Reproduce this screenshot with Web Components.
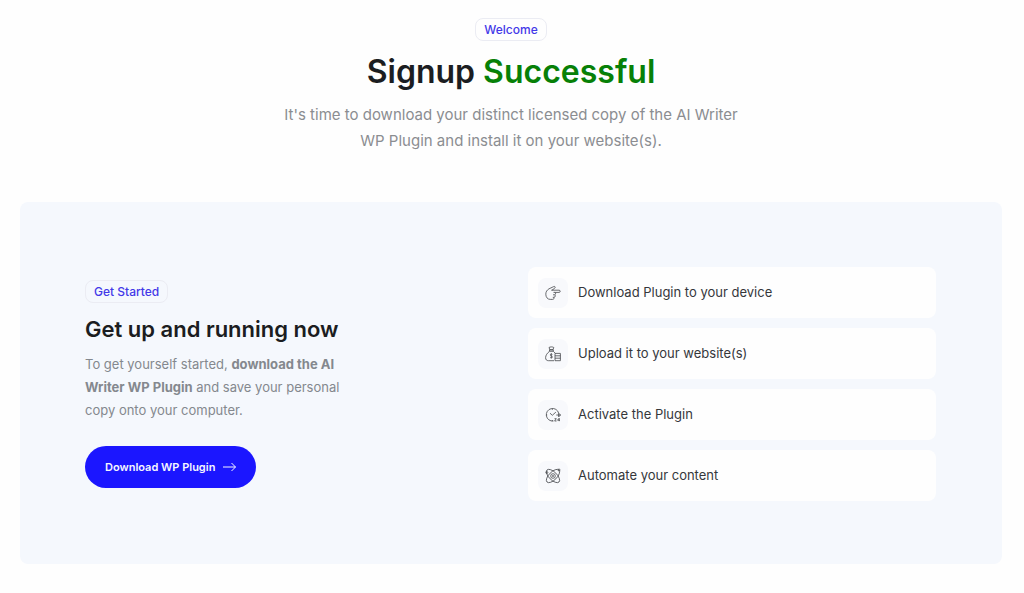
<!DOCTYPE html>
<html lang="en">
<head>
<meta charset="UTF-8">
<meta name="viewport" content="width=device-width, initial-scale=1.0">
<title>Signup Successful</title>
<style>
    body {
        margin: 0;
        background: #fefefe;
        color: #1b1d21;
        font-family: Inter, "Liberation Sans", sans-serif;
    }
</style>
</head>
<body>
<signup-page>
    <page-intro>
        <pill-badge slot="badge">Welcome</pill-badge>
        <span slot="title">Signup</span>
        <span slot="accent">Successful</span>
        It's time to download your distinct licensed copy of the AI Writer WP Plugin and install it on your website(s).
    </page-intro>
    <start-panel>
        <pill-badge slot="badge">Get Started</pill-badge>
        <span slot="title">Get up and running now</span>
        <span slot="text">To get yourself started, <b>download the AI Writer WP Plugin</b> and save your personal copy onto your computer.</span>
        <download-button slot="action">Download WP Plugin</download-button>
        <step-item icon="hand">Download Plugin to your device</step-item>
        <step-item icon="bag">Upload it to your website(s)</step-item>
        <step-item icon="clock">Activate the Plugin</step-item>
        <step-item icon="atom">Automate your content</step-item>
    </start-panel>
</signup-page>

<script>
    const icons = {
        hand: `
            <path d="M7 5.200 9.600 3.300c1.200-1 .4-2.300-.9-1.700L4 3.800C2 5 .8 6.800.8 9.200c0 3 1.700 5.200 4.500 5.200h2.200c1.300 0 1.800-1 1.500-2"/>
            <path d="M6.200 5.200h7.900c1.500 0 1.500 2.200 0 2.200H8.500"/>
            <path d="M9.800 7.400c1.200.4 1 2.300-.3 2.400H8M9.700 9.800c1 .5.700 2.400-.7 2.500H7.800"/>`,
        bag: `
            <path d="M4 1.500c1-.8 3.800-.8 4.800 0l-.9 2.300h-3z"/>
            <path d="M4.500 3.800h3.800v1.500H4.500z"/>
            <path d="M4.500 5.300C2.300 7 .6 9.300.6 11.700c0 2 1 3 2.900 3H9M8.300 5.300l1.900 1.900"/>
            <path d="M7.400 8.500c-.5-.8-2.100-.6-2.100.4 0 1.200 2.100.8 2.100 2.100 0 1.100-1.700 1.200-2.200.3M6.300 7.300v5"/>
            <path d="M10 7.400h5.400v7.300H10zM10 9.800h5.400M10 12.200h5.400"/>`,
        clock: `
            <path d="M13.700 6.200A6.300 6.300 0 1 0 8.500 14M5 6.200 7.300 8.300l3.600-3.200"/>
            <path d="M7.300 1.700v1.200M1 8h1.200M7.300 13v1.200M11.300 8h4.200M13.600 6.200v3.700M13.900 9.800 15.500 8l-1.600-1.700"/>
            <path d="M9.500 11.700h1.800L9.600 14h1.900M14.200 14.200v-3l-1.700 2h2.500"/>`,
        atom: `
            <ellipse cx="8" cy="8" rx="8.500" ry="4" transform="rotate(45 8 8)"/>
            <ellipse cx="8" cy="8" rx="8.500" ry="4" transform="rotate(-45 8 8)"/>
            <circle cx="8" cy="8" r="2.300"/>
            <circle cx="8" cy="8" r=".6"/>
            <circle cx="1.800" cy="4.500" r="1"/>
            <circle cx="14" cy="2" r="1"/>`
    };

    class PillBadge extends HTMLElement {
        connectedCallback() {
            this.attachShadow({ mode: 'open' });
            this.shadowRoot.innerHTML = `
                <style>
                    :host {
                        display: inline-block;
                        padding: 0 8px;
                        border: 1px solid #ebecf3;
                        border-radius: 8px;
                        color: #4338e8;
                        font-size: 12px;
                        font-weight: 500;
                        line-height: 21px;
                    }
                </style>
                <slot></slot>
            `;
        }
    }

    class PageIntro extends HTMLElement {
        connectedCallback() {
            this.attachShadow({ mode: 'open' });
            this.shadowRoot.innerHTML = `
                <style>
                    :host {
                        display: flex;
                        flex-direction: column;
                        align-items: center;
                        text-align: center;
                    }
                    h1 {
                        margin: 8px 0 7px;
                        font-size: 32px;
                        font-weight: 600;
                        line-height: 46px;
                    }
                    .accent {
                        color: #078007;
                    }
                    p {
                        margin: 0;
                        max-width: 460px;
                        color: #8b8d91;
                        font-size: 15px;
                        line-height: 26px;
                    }
                </style>
                <slot name="badge"></slot>
                <h1><slot name="title"></slot> <span class="accent"><slot name="accent"></slot></span></h1>
                <p><slot></slot></p>
            `;
        }
    }

    class DownloadButton extends HTMLElement {
        connectedCallback() {
            this.attachShadow({ mode: 'open' });
            this.shadowRoot.innerHTML = `
                <style>
                    :host {
                        display: inline-block;
                    }
                    button {
                        display: flex;
                        align-items: center;
                        gap: 8px;
                        padding: 0 20px;
                        border: 0;
                        border-radius: 24px;
                        background: #1b16ff;
                        color: #f5f5ff;
                        font: inherit;
                        font-size: 11px;
                        font-weight: 600;
                        line-height: 42px;
                        cursor: pointer;
                    }
                    svg {
                        width: 13px;
                        height: 12px;
                        fill: none;
                        stroke: currentColor;
                    }
                </style>
                <button type="button">
                    <slot></slot>
                    <svg viewBox="0 0 13 12" aria-hidden="true"><path d="M0 6h12.500M8.500 2l4 4-4 4"/></svg>
                </button>
            `;
        }
    }

    class StepItem extends HTMLElement {
        connectedCallback() {
            this.attachShadow({ mode: 'open' });
            this.shadowRoot.innerHTML = `
                <style>
                    :host {
                        display: flex;
                        align-items: center;
                        gap: 10px;
                        padding: 10px;
                        border-radius: 8px;
                        background: #fefefe;
                        color: #35373b;
                        font-size: 13px;
                        line-height: 31px;
                    }
                    .icon {
                        display: grid;
                        place-items: center;
                        width: 30px;
                        height: 30px;
                        border-radius: 8px;
                        background: #f8f9fc;
                    }
                    svg {
                        width: 16px;
                        height: 16px;
                        overflow: visible;
                        fill: none;
                        stroke: #45474b;
                        stroke-width: 0.8;
                        stroke-linejoin: round;
                    }
                </style>
                <span class="icon"><svg viewBox="0 0 16 16" aria-hidden="true">${icons[this.getAttribute('icon')]}</svg></span>
                <span><slot></slot></span>
            `;
        }
    }

    class StartPanel extends HTMLElement {
        connectedCallback() {
            this.attachShadow({ mode: 'open' });
            this.shadowRoot.innerHTML = `
                <style>
                    :host {
                        display: grid;
                        grid-template-columns: 1fr 1fr;
                        align-items: center;
                        gap: 35px;
                        padding: 65px 66px 63px 65px;
                        border-radius: 8px;
                        background: #f5f8fd;
                    }
                    .copy {
                        max-width: 272px;
                    }
                    h2 {
                        margin: 10px 0 8px;
                        font-size: 22px;
                        font-weight: 600;
                        line-height: 32px;
                    }
                    p {
                        margin: 0 0 24px;
                        color: #84888e;
                        font-size: 13px;
                        line-height: 23px;
                    }
                    .steps {
                        display: grid;
                        gap: 10px;
                    }
                    @media (max-width: 700px) {
                        :host {
                            grid-template-columns: 1fr;
                            padding: 24px;
                        }
                    }
                </style>
                <div class="copy">
                    <slot name="badge"></slot>
                    <h2><slot name="title"></slot></h2>
                    <p><slot name="text"></slot></p>
                    <slot name="action"></slot>
                </div>
                <div class="steps"><slot></slot></div>
            `;
        }
    }

    class SignupPage extends HTMLElement {
        connectedCallback() {
            this.attachShadow({ mode: 'open' });
            this.shadowRoot.innerHTML = `
                <style>
                    :host {
                        display: block;
                    }
                    main {
                        display: grid;
                        gap: 48px;
                        padding: 18px 22px 28px 20px;
                    }
                </style>
                <main><slot></slot></main>
            `;
        }
    }

    customElements.define('pill-badge', PillBadge);
    customElements.define('page-intro', PageIntro);
    customElements.define('download-button', DownloadButton);
    customElements.define('step-item', StepItem);
    customElements.define('start-panel', StartPanel);
    customElements.define('signup-page', SignupPage);
</script>
</body>
</html>
